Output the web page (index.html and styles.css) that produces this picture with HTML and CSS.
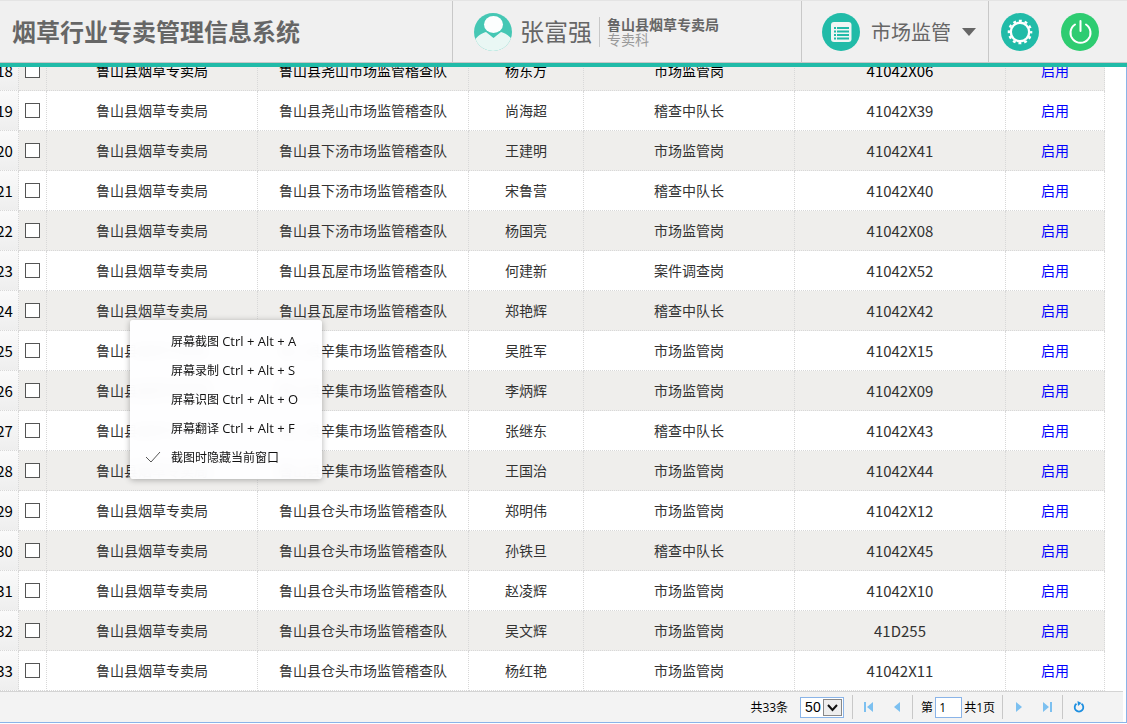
FILE: index.html
```html
<!DOCTYPE html>
<html lang="zh-CN">

<head>
    <meta charset="UTF-8">
    <meta name="viewport" content="width=device-width, initial-scale=1.0">
    <title>烟草行业专卖管理信息系统</title>
    <link rel="stylesheet" href="styles.css">
</head>

<body>
    <header class="topbar">
        <h1 class="title">烟草行业专卖管理信息系统</h1>
        <div class="user">
            <svg class="icon" viewBox="0 0 38 38">
                <defs>
                    <clipPath id="avatar"><circle cx="19" cy="19" r="19"/></clipPath>
                </defs>
                <circle cx="19" cy="19" r="19" fill="#45c7b4"/>
                <g clip-path="url(#avatar)">
                    <path d="M0 28C3 23 8 20 12 19L19.500 25L27 19C31 20 36 23 39 28V38H0z" fill="#e9f7f4"/>
                    <ellipse cx="19.500" cy="11.500" rx="9.500" ry="8.500" fill="#fcfefe"/>
                </g>
            </svg>
            <span class="name">张富强</span>
            <div class="org">
                <strong>鲁山县烟草专卖局</strong>
                <span>专卖科</span>
            </div>
        </div>
        <button class="module">
            <svg class="icon" viewBox="0 0 38 38">
                <circle cx="19" cy="19" r="19" fill="#21bba8"/>
                <rect x="9" y="9" width="20.500" height="20" rx="3" fill="#f0f5f4"/>
                <path d="M12 15h2M12 18.500h2M12 22h2M12 25.500h2M15 15h12M15 18.500h12M15 22h12M15 25.500h12" stroke="#21bba8" stroke-width="2.200"/>
            </svg>
            <span>市场监管</span>
            <svg class="caret" viewBox="0 0 14 8"><path d="M0 0h14L7 8z" fill="#666"/></svg>
        </button>
        <div class="tools">
            <button aria-label="设置">
                <svg class="icon" viewBox="0 0 38 38">
                    <circle cx="19" cy="19" r="19" fill="#21bba8"/>
                    <circle cx="19" cy="19" r="9.200" fill="none" stroke="#fff" stroke-width="2.400"/>
                    <circle cx="19" cy="19" r="11.100" fill="none" stroke="#fff" stroke-width="2.400" stroke-dasharray="2.906 2.906" stroke-dashoffset="1.453"/>
                </svg>
            </button>
            <button aria-label="退出">
                <svg class="icon" viewBox="0 0 38 38">
                    <circle cx="19" cy="19" r="19" fill="#2ecc71"/>
                    <path d="M14 11.500A10 10 0 1 0 25 11.500M19.500 8v10" fill="none" stroke="#fff" stroke-width="2" stroke-linecap="round"/>
                </svg>
            </button>
        </div>
    </header>

    <main class="panel">
        <div class="grid">
            <table>
                <colgroup>
                    <col class="c-num"><col class="c-check"><col class="c-wide"><col class="c-wide">
                    <col class="c-name"><col class="c-wide"><col class="c-wide"><col class="c-state">
                </colgroup>
                <tbody id="rows"></tbody>
            </table>
        </div>

        <footer class="pager">
            <span class="total">共33条</span>
            <span class="size">
                <select aria-label="每页条数">
                    <option>50</option>
                </select>
                <svg viewBox="0 0 19 17"><rect x=".5" y=".5" width="18" height="16" fill="#eee" stroke="#888"/><path d="M5 6l4.500 5L14 6" fill="none" stroke="#111" stroke-width="2"/></svg>
            </span>
            <i class="sep"></i>
            <button aria-label="首页"><svg viewBox="0 0 10 10"><path d="M0 0h2v10H0zM9 0v10L3 5z"/></svg></button>
            <button aria-label="上一页"><svg viewBox="0 0 10 10"><path d="M8 0v10L2 5z"/></svg></button>
            <i class="sep"></i>
            <label class="page">第<input type="text" value="1">共1页</label>
            <i class="sep"></i>
            <button aria-label="下一页"><svg viewBox="0 0 10 10"><path d="M2 0v10l6-5z"/></svg></button>
            <button aria-label="末页"><svg viewBox="0 0 10 10"><path d="M8 0h2v10H8zM1 0v10l6-5z"/></svg></button>
            <i class="sep"></i>
            <button class="refresh" aria-label="刷新"><svg viewBox="0 0 12 12"><path d="M8.500 2.800A4.300 4.300 0 1 1 3.500 2.800" fill="none" stroke="#1e8fe0" stroke-width="1.800"/><path d="M4.500 0l4 2-3.500 3z" fill="#1e8fe0"/></svg></button>
        </footer>
    </main>

    <ul class="menu">
        <li>屏幕截图 <kbd>Ctrl + Alt + A</kbd></li>
        <li>屏幕录制 <kbd>Ctrl + Alt + S</kbd></li>
        <li>屏幕识图 <kbd>Ctrl + Alt + O</kbd></li>
        <li>屏幕翻译 <kbd>Ctrl + Alt + F</kbd></li>
        <li><svg viewBox="0 0 16 12"><path d="M1 6l5 5L15 1" fill="none" stroke="#555" stroke-width="1"/></svg>截图时隐藏当前窗口</li>
    </ul>

    <script src="script.js"></script>
</body>

</html>
```
FILE: styles.css
```css
* {
    box-sizing: border-box;
}

body {
    display: flex;
    flex-direction: column;
    height: 100vh;
    margin: 0;
    padding-bottom: 1px;
    overflow: hidden;
    background: #fff;
    color: #333;
    font-family: "Open Sans", "Noto Sans CJK SC", sans-serif;
    font-size: 14px;
}

button {
    display: flex;
    align-items: center;
    padding: 0;
    border: 0;
    background: none;
    color: inherit;
    font: inherit;
    cursor: pointer;
}

/* header */
.topbar {
    display: flex;
    flex: none;
    height: 67px;
    border-top: 1px solid #e4e4e4;
    border-bottom: 4px solid #21bba8;
    background: #f0f0f0;
    box-shadow: inset 0 -1px #c8c8c8;
    color: #666;
}

.title {
    flex: 1;
    margin: 0;
    padding-left: 12px;
    font-size: 24px;
    line-height: 61px;
    white-space: nowrap;
}

.icon {
    display: block;
    width: 38px;
    height: 38px;
}

.user,
.module,
.tools {
    display: flex;
    align-items: center;
    height: 61px;
    border-left: 1px solid #c8c8c8;
}

.user {
    width: 349px;
    padding-left: 21px;
}

.name {
    margin-left: 8px;
    font-size: 24px;
    line-height: 32px;
}

.org {
    display: flex;
    flex-direction: column;
    margin-left: 7px;
    padding-left: 7px;
    border-left: 1px solid #c8c8c8;
    line-height: 15px;
}

.org span {
    color: #999;
}

.module {
    gap: 11px;
    width: 187px;
    padding-left: 20px;
    font-size: 20px;
}

.caret {
    width: 14px;
    height: 8px;
}

.tools {
    gap: 22px;
    width: 139px;
    padding-left: 12px;
}

/* grid */
.panel {
    display: flex;
    flex: 1;
    flex-direction: column;
    min-height: 0;
    border-right: 1px solid #8ab4e8;
    border-bottom: 1px solid #8ab4e8;
}

.grid {
    display: flex;
    flex: 1;
    flex-direction: column;
    justify-content: flex-end;
    min-height: 0;
    overflow: hidden;
}

table {
    width: calc(100% - 12px);
    margin-left: -9px;
    border-spacing: 0;
    table-layout: fixed;
}

td {
    height: 40px;
    padding: 0;
    border-right: 1px dotted #d8d8d8;
    border-bottom: 1px dotted #d8d8d8;
    line-height: 20px;
    text-align: center;
}

.alt td {
    background: #efeeec;
}

.hover td {
    color: #000;
}

td.num {
    background: linear-gradient(#fafafa, #eee);
    color: #000;
}

td.num,
td.code {
    font-family: "Noto Sans CJK SC", sans-serif;
    font-size: 15px;
}

td a {
    color: #00f;
    text-decoration: none;
}

td input {
    display: block;
    width: 15px;
    height: 15px;
    margin: 0 auto;
    border: 1px solid #555;
    background: #fff;
    appearance: none;
}

.c-num {
    width: 28px;
}

.c-check {
    width: 28px;
}

.c-wide {
    width: 211px;
}

.c-name {
    width: 115px;
}

.c-state {
    width: 99px;
}

/* pager */
.pager {
    display: flex;
    flex: none;
    align-items: center;
    justify-content: flex-end;
    height: 31px;
    margin-right: 3px;
    padding-right: 30px;
    border-top: 1px solid #d4d4d4;
    background: #f3f3f3;
    color: #000;
    font-size: 12px;
}

.size {
    position: relative;
    margin: 0 8px 0 12px;
}

.size select {
    display: block;
    width: 44px;
    height: 21px;
    padding: 0 4px;
    border: 1px solid #8ab4e8;
    border-radius: 0;
    background: #fff;
    font-family: "Liberation Sans", sans-serif;
    font-size: 14px;
    appearance: none;
}

.size svg {
    position: absolute;
    top: 2px;
    right: 2px;
    width: 19px;
    height: 17px;
    pointer-events: none;
}

.sep {
    width: 1px;
    height: 24px;
    background: #c8c8c8;
}

.pager button {
    justify-content: center;
    width: 28px;
    height: 24px;
}

.pager button svg {
    width: 10px;
    height: 10px;
    fill: #7cc0f0;
}

.pager .sep + button {
    margin-left: 2px;
}

.pager button + .sep {
    margin-left: 1px;
}

.page {
    display: flex;
    align-items: center;
    padding: 0 7px 0 8px;
}

.page input {
    width: 27px;
    height: 21px;
    margin: 0 2px;
    padding: 0 3px;
    border: 1px solid #8ab4e8;
    font: inherit;
}

.pager .refresh svg {
    width: 12px;
    height: 12px;
}

/* context menu */
.menu {
    position: absolute;
    top: 320px;
    left: 130px;
    width: 192px;
    margin: 0;
    padding: 7px 0;
    border-radius: 3px;
    background: rgba(254, 254, 255, 0.96);
    box-shadow: 0 1px 6px rgba(0, 0, 0, 0.3);
    backdrop-filter: blur(6px);
    color: #111;
    font-size: 12px;
    line-height: 29px;
    list-style: none;
    white-space: nowrap;
}

.menu li {
    position: relative;
    height: 29px;
    padding-left: 41px;
}

.menu kbd {
    font-family: inherit;
    font-size: 13px;
}

.menu svg {
    position: absolute;
    top: 8px;
    left: 15px;
    width: 16px;
    height: 12px;
}
```
FILE: script.js
```js
const bureau = "鲁山县烟草专卖局";
const data = [
    ["尧山", "杨东方", "市场监管岗", "41042X06"],
    ["尧山", "尚海超", "稽查中队长", "41042X39"],
    ["下汤", "王建明", "市场监管岗", "41042X41"],
    ["下汤", "宋鲁营", "稽查中队长", "41042X40"],
    ["下汤", "杨国亮", "市场监管岗", "41042X08"],
    ["瓦屋", "何建新", "案件调查岗", "41042X52"],
    ["瓦屋", "郑艳辉", "稽查中队长", "41042X42"],
    ["辛集", "吴胜军", "市场监管岗", "41042X15"],
    ["辛集", "李炳辉", "市场监管岗", "41042X09"],
    ["辛集", "张继东", "稽查中队长", "41042X43"],
    ["辛集", "王国治", "市场监管岗", "41042X44"],
    ["仓头", "郑明伟", "市场监管岗", "41042X12"],
    ["仓头", "孙铁旦", "稽查中队长", "41042X45"],
    ["仓头", "赵凌辉", "市场监管岗", "41042X10"],
    ["仓头", "吴文辉", "市场监管岗", "41D255"],
    ["仓头", "杨红艳", "市场监管岗", "41042X11"]
];

const rows = document.querySelector("#rows");

data.forEach(([place, name, post, code], i) => {
    const no = 18 + i;
    const tr = document.createElement("tr");
    if (no % 2 === 0) tr.classList.add("alt");
    if (i === 0) tr.classList.add("hover");
    tr.innerHTML = `
        <td class="num">${no}</td>
        <td><input type="checkbox" aria-label="选择第${no}行"></td>
        <td>${bureau}</td>
        <td>鲁山县${place}市场监管稽查队</td>
        <td>${name}</td>
        <td>${post}</td>
        <td class="code">${code}</td>
        <td><a href="#">启用</a></td>`;
    rows.appendChild(tr);
});
```
